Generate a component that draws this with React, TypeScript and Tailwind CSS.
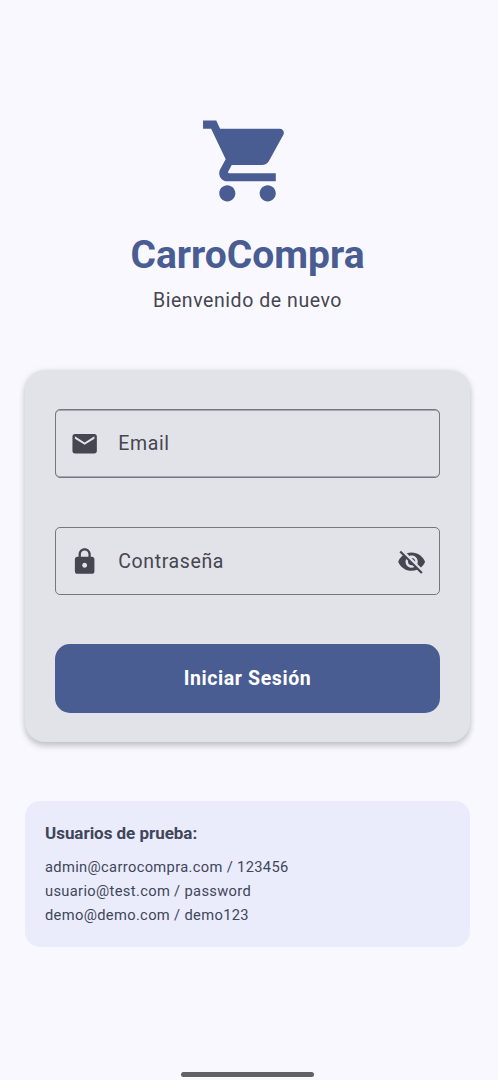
import React from "react";

type IconProps = { path: string; className: string };

function Icon({ path, className }: IconProps) {
  return (
    <svg viewBox="0 0 24 24" fill="currentColor" className={className} aria-hidden="true">
      <path d={path} />
    </svg>
  );
}

const cart =
  "M7 18c-1.1 0-1.99.9-1.99 2S5.9 22 7 22s2-.9 2-2-.9-2-2-2zM1 2v2h2l3.6 7.59-1.35 2.45c-.16.28-.25.61-.25.96 0 1.1.9 2 2 2h12v-2H7.42c-.14 0-.25-.11-.25-.25l.03-.12.9-1.63h7.45c.75 0 1.41-.41 1.75-1.03l3.58-6.49c.08-.14.12-.31.12-.48 0-.55-.45-1-1-1H5.21l-.94-2H1zm16 16c-1.1 0-1.99.9-1.99 2s.89 2 1.99 2 2-.9 2-2-.9-2-2-2z";
const mail =
  "M20 4H4c-1.1 0-1.99.9-1.99 2L2 18c0 1.1.9 2 2 2h16c1.1 0 2-.9 2-2V6c0-1.1-.9-2-2-2zm0 4l-8 5-8-5V6l8 5 8-5v2z";
const lock =
  "M18 8h-1V6c0-2.76-2.24-5-5-5S7 3.24 7 6v2H6c-1.1 0-2 .9-2 2v10c0 1.1.9 2 2 2h12c1.1 0 2-.9 2-2V10c0-1.1-.9-2-2-2zm-6 9c-1.1 0-2-.9-2-2s.9-2 2-2 2 .9 2 2-.9 2-2 2zm3.1-9H8.9V6c0-1.71 1.39-3.1 3.1-3.1 1.71 0 3.1 1.39 3.1 3.1v2z";
const eyeOff =
  "M12 7c2.76 0 5 2.24 5 5 0 .65-.13 1.26-.36 1.83l2.92 2.92c1.51-1.26 2.7-2.89 3.43-4.75-1.73-4.39-6-7.5-11-7.5-1.4 0-2.74.25-3.98.7l2.16 2.16C10.74 7.13 11.35 7 12 7zM2 4.27l2.28 2.28.46.46C3.08 8.3 1.78 10.02 1 12c1.73 4.39 6 7.5 11 7.5 1.55 0 3.03-.3 4.38-.84l.42.42L19.73 22 21 20.73 3.27 3 2 4.27zM7.53 9.8l1.55 1.55c-.05.21-.08.43-.08.65 0 1.66 1.34 3 3 3 .22 0 .44-.03.65-.08l1.55 1.55c-.67.33-1.41.53-2.2.53-2.76 0-5-2.24-5-5 0-.79.2-1.53.53-2.2zm4.31-.78l3.15 3.15.02-.16c0-1.66-1.34-3-3-3l-.17.01z";

const testUsers = [
  "admin@carrocompra.com / 123456",
  "usuario@test.com / password",
  "demo@demo.com / demo123",
];

export default function App() {
  return (
    <div className="h-[1080px] w-[498px] overflow-hidden bg-[#f9f8ff] font-['Roboto',sans-serif]">
      <main className="flex h-full w-[495px] flex-col items-center pt-28">
        <Icon path={cart} className="h-[98px] w-[97px] shrink-0 text-[#495d92]" />
        <h1 className="mt-[21px] text-[39px] leading-[49px] font-bold text-[#495d92]">CarroCompra</h1>
        <p className="mt-[6px] text-[19.5px] leading-[29px] tracking-[0.56px] text-[#45464f]">
          Bienvenido de nuevo
        </p>

        <form className="mt-[55px] flex h-[372px] w-[445px] shrink-0 flex-col rounded-[20px] bg-[#e2e2e9] px-[30px] pt-[39px] text-[#45464f] shadow-[0_4px_6px_rgba(0,0,0,0.2),0_0_7px_rgba(0,0,0,0.07)]">
          <label className="flex h-[69px] items-center rounded-[5px] border border-[#757680] pr-[13px] pl-[14px] shadow-[inset_0_1px_0_rgba(117,118,128,0.55),inset_0_-1px_0_rgba(117,118,128,0.55)]">
            <Icon path={mail} className="size-[29.3px]" />
            <span className="ml-[19px] text-[19.5px] tracking-[0.61px]">Email</span>
          </label>
          <label className="mt-[49px] flex h-[68px] items-center rounded-[5px] border border-[#757680] pt-px pr-[13px] pl-[14px]">
            <Icon path={lock} className="size-[29.3px]" />
            <span className="ml-[19px] text-[19.5px] tracking-[0.61px]">Contraseña</span>
            <Icon path={eyeOff} className="ml-auto size-[29.3px]" />
          </label>
          <button
            type="button"
            className="mt-[49px] h-[69px] rounded-[15px] bg-[#495d92] text-[19.5px] font-bold tracking-[0.61px] text-white"
          >
            Iniciar Sesión
          </button>
        </form>

        <section className="mt-[59px] h-[146px] w-[445px] shrink-0 rounded-[15px] bg-[#eaecfc] px-5 pt-5 text-[#404659]">
          <h2 className="text-[17px] leading-6 font-bold tracking-[-0.03px]">Usuarios de prueba:</h2>
          <ul className="mt-[10px] text-[14.7px] leading-6 tracking-[0.34px]">
            {testUsers.map((user) => (
              <li key={user}>{user}</li>
            ))}
          </ul>
        </section>

        <div className="mt-auto mb-[3px] h-[5px] w-[133px] shrink-0 rounded-full bg-[#626165]" />
      </main>
    </div>
  );
}
